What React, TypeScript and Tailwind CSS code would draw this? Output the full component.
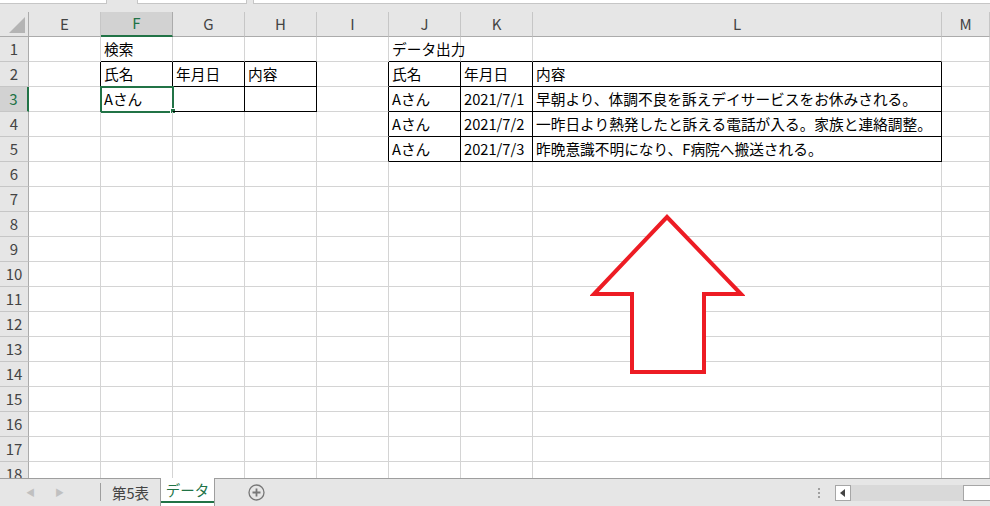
import React from "react";

const cols = [
  { l: "E", w: 72 },
  { l: "F", w: 72 },
  { l: "G", w: 72 },
  { l: "H", w: 72 },
  { l: "I", w: 72 },
  { l: "J", w: 72 },
  { l: "K", w: 72 },
  { l: "L", w: 409 },
  { l: "M", w: 48 },
];

const data: Record<string, string> = {
  F1: "検索",
  F2: "氏名",
  G2: "年月日",
  H2: "内容",
  F3: "Aさん",
  J1: "データ出力",
  J2: "氏名",
  K2: "年月日",
  L2: "内容",
  J3: "Aさん",
  K3: "2021/7/1",
  L3: "早朝より、体調不良を訴えデイサービスをお休みされる。",
  J4: "Aさん",
  K4: "2021/7/2",
  L4: "一昨日より熱発したと訴える電話が入る。家族と連絡調整。",
  J5: "Aさん",
  K5: "2021/7/3",
  L5: "昨晩意識不明になり、F病院へ搬送される。",
};

const bordered = new Set<string>();
["F", "G", "H"].forEach((c) => [2, 3].forEach((r) => bordered.add(c + r)));
["J", "K", "L"].forEach((c) => [2, 3, 4, 5].forEach((r) => bordered.add(c + r)));

const letters = cols.map((c) => c.l);
const nextCol = (c: string) => letters[letters.indexOf(c) + 1] ?? "";

const rows = Array.from({ length: 18 }, (_, i) => i + 1);

function Cell({ col, row, w }: { col: string; row: number; w: number }) {
  const id = col + row;
  const blackRight = bordered.has(id) || bordered.has(nextCol(col) + row);
  const blackBottom = bordered.has(id) || bordered.has(col + (row + 1));
  const selected = id === "F3";
  return (
    <div
      style={{ width: w }}
      className={`relative h-[25px] shrink-0 flex items-center pl-[3px] whitespace-nowrap text-[14.7px] text-black border-r border-b ${
        blackRight ? "border-r-black" : "border-r-[#d4d4d4]"
      } ${blackBottom ? "border-b-black" : "border-b-[#d4d4d4]"}`}
    >
      {data[id]}
      {selected && (
        <>
          <div className="absolute -left-px -top-px w-[74px] h-[27px] border-2 border-[#217346]" />
          <div className="absolute left-[69px] top-[21px] w-[6px] h-[6px] bg-[#217346] border border-white" />
        </>
      )}
    </div>
  );
}

export default function App() {
  return (
    <div className="relative w-[990px] h-[506px] overflow-hidden bg-white flex flex-col font-['Noto_Sans_CJK_JP',sans-serif]">
      {/* formula bar remnants */}
      <div className="h-[12px] shrink-0 bg-[#e6e6e6] flex">
        <div className="w-[107px] h-[4px] bg-white border-r border-b border-[#c6c6c6]" />
        <div className="ml-[30px] w-[110px] h-[4px] bg-white border-x border-b border-[#c6c6c6]" />
        <div className="ml-[6px] flex-1 h-[4px] bg-white border-l border-b border-[#c6c6c6]" />
      </div>

      {/* sheet */}
      <div className="flex-1 overflow-hidden">
        {/* column headers */}
        <div className="flex h-[25px] bg-[#e6e6e6]">
          <div className="relative w-[29px] shrink-0 border-r border-b border-[#ababab]">
            <svg className="absolute left-[8px] top-[4px]" width="18" height="18" viewBox="0 0 18 18">
              <polygon points="17,1 17,17 1,17" fill="#b4b4b4" />
            </svg>
          </div>
          {cols.map((c) =>
            c.l === "F" ? (
              <div
                key={c.l}
                style={{ width: c.w }}
                className="shrink-0 flex items-center justify-center bg-[#d2d2d2] text-[#217346] text-[15px] border-r border-r-[#ababab] border-b-2 border-b-[#217346]"
              >
                {c.l}
              </div>
            ) : (
              <div
                key={c.l}
                style={{ width: c.w }}
                className="shrink-0 flex items-center justify-center text-[#444] text-[15px] border-r border-r-[#c6c6c6] border-b border-b-[#ababab]"
              >
                {c.l}
              </div>
            )
          )}
        </div>

        {rows.map((r) => (
          <div key={r} className="flex">
            {r === 3 ? (
              <div className="w-[29px] h-[25px] shrink-0 flex items-center justify-center bg-[#d2d2d2] text-[#217346] text-[15px] border-r-2 border-r-[#217346] border-b border-b-[#c6c6c6]">
                {r}
              </div>
            ) : (
              <div className="w-[29px] h-[25px] shrink-0 flex items-center justify-center bg-[#e6e6e6] text-[#444] text-[15px] border-r border-r-[#ababab] border-b border-b-[#c6c6c6]">
                {r}
              </div>
            )}
            {cols.map((c) => (
              <Cell key={c.l} col={c.l} row={r} w={c.w} />
            ))}
          </div>
        ))}
      </div>

      {/* sheet tabs */}
      <div className="relative h-[28px] shrink-0 bg-[#e6e6e6] flex items-stretch text-[14.5px]">
        <div className="flex-1 flex border-t border-[#9e9e9e]">
          <div className="w-[100px] shrink-0 flex items-center">
            <span className="ml-[26px] text-[9px] text-[#c0c0c0]">◀</span>
            <span className="ml-[20px] text-[9px] text-[#c0c0c0]">▶</span>
          </div>
          <div className="w-px h-[18px] mt-[4px] bg-[#9e9e9e]" />
          <div className="w-[59px] flex items-center pl-[11px] text-[#444]">第5表</div>
        </div>
        <div className="w-[55px] shrink-0 bg-white border-x border-[#9e9e9e] flex flex-col">
          <div className="flex-1 flex items-center justify-center pt-px text-[#217346]">データ</div>
          <div className="h-[2px] bg-[#217346] mb-[3px]" />
        </div>
        <div className="w-[776px] shrink-0 flex items-center border-t border-[#9e9e9e]">
          <svg className="ml-[33px]" width="17" height="17" viewBox="0 0 17 17">
            <circle cx="8.5" cy="8.5" r="7.5" fill="none" stroke="#777" strokeWidth="1.3" />
            <path d="M8.5 4.5v8M4.5 8.5h8" stroke="#777" strokeWidth="1.8" />
          </svg>
          <div className="ml-[553px] flex flex-col gap-[2px]">
            <div className="w-[2px] h-[2px] bg-[#a0a0a0]" />
            <div className="w-[2px] h-[2px] bg-[#a0a0a0]" />
            <div className="w-[2px] h-[2px] bg-[#a0a0a0]" />
          </div>
          <div className="ml-[15px] w-[16px] h-[16px] bg-white border border-[#a6a6a6] flex items-center justify-center">
            <svg width="6" height="8" viewBox="0 0 6 8">
              <polygon points="5,0 5,8 0,4" fill="#444" />
            </svg>
          </div>
          <div className="w-[112px] h-[16px] bg-[#d9d9d9]" />
          <div className="flex-1 h-[16px] bg-white border border-r-0 border-[#a6a6a6]" />
        </div>
      </div>

      {/* arrow shape */}
      <svg
        className="absolute left-[590px] top-[213px] pointer-events-none"
        width="155"
        height="163"
        viewBox="0 0 155 163"
      >
        <polygon
          points="77,4 4,81 42,81 42,159 114,159 114,81 151,81"
          fill="white"
          stroke="#ed1c24"
          strokeWidth="4"
          strokeLinejoin="miter"
        />
      </svg>
    </div>
  );
}
